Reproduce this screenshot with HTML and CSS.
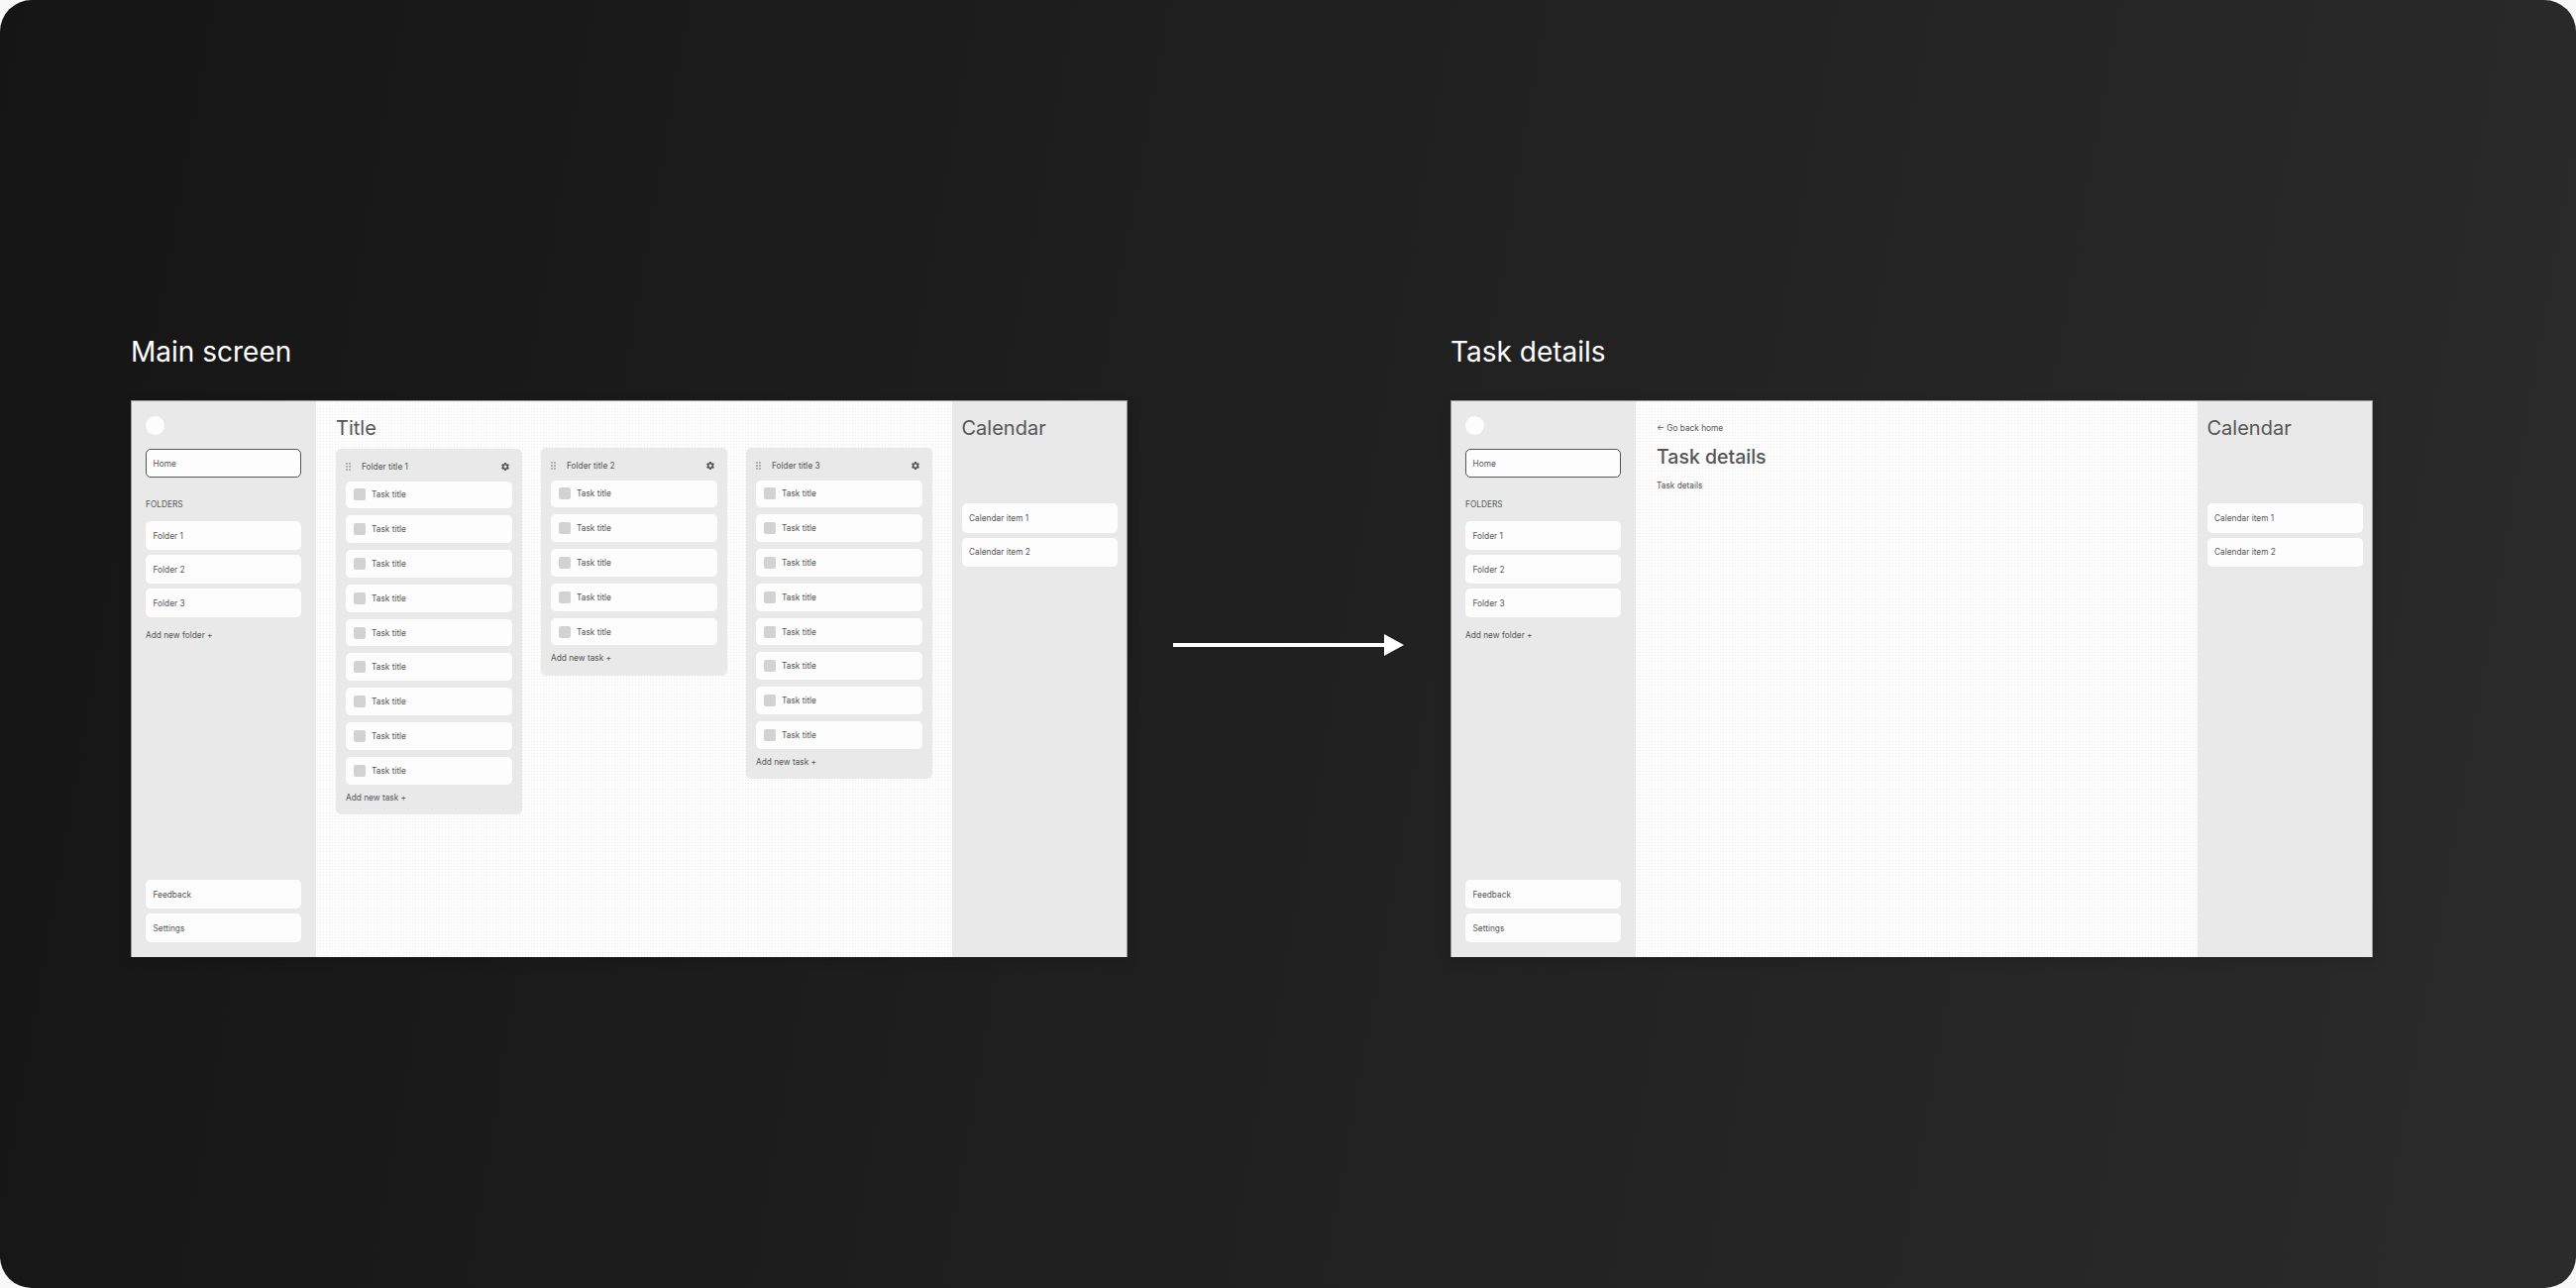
FILE: index.html
```html
<!DOCTYPE html>
<html lang="en">
<head>
  <meta charset="UTF-8">
  <title>Main screen and Task details</title>
  <link rel="stylesheet" href="styles.css">
</head>
<body>
  <svg class="defs" width="0" height="0">
    <symbol id="gear" viewBox="0 0 24 24">
      <path d="M19.14 12.94c.04-.3.06-.61.06-.94 0-.32-.02-.64-.07-.94l2.03-1.58c.18-.14.23-.41.12-.61l-1.92-3.32c-.12-.22-.37-.29-.59-.22l-2.39.96c-.5-.38-1.03-.7-1.62-.94l-.36-2.54c-.04-.24-.24-.41-.48-.41h-3.84c-.24 0-.43.17-.47.41l-.36 2.54c-.59.24-1.13.57-1.62.94l-2.39-.96c-.22-.08-.47 0-.59.22L2.74 8.87c-.12.21-.08.47.12.61l2.03 1.58c-.05.3-.09.63-.09.94s.02.64.07.94l-2.03 1.58c-.18.14-.23.41-.12.61l1.92 3.32c.12.22.37.29.59.22l2.39-.96c.5.38 1.03.7 1.62.94l.36 2.54c.05.24.24.41.48.41h3.84c.24 0 .44-.17.47-.41l.36-2.54c.59-.24 1.13-.56 1.62-.94l2.39.96c.22.08.47 0 .59-.22l1.92-3.32c.12-.22.07-.47-.12-.61l-2.01-1.58zM12 15.6c-1.98 0-3.6-1.62-3.6-3.6s1.62-3.6 3.6-3.6 3.6 1.62 3.6 3.6-1.62 3.6-3.6 3.6z"/>
    </symbol>
    <symbol id="grip" viewBox="0 0 6 8">
      <circle cx="1" cy="1" r=".7"/><circle cx="4" cy="1" r=".7"/>
      <circle cx="1" cy="4" r=".7"/><circle cx="4" cy="4" r=".7"/>
      <circle cx="1" cy="7" r=".7"/><circle cx="4" cy="7" r=".7"/>
    </symbol>
  </svg>

  <div class="page">
    <section class="screen screen-main">
      <h2 class="screen-label">Main screen</h2>
      <div class="frame">
        <aside class="sidebar">
          <div class="logo"></div>
          <div class="card card-home">Home</div>
          <div class="section-label">FOLDERS</div>
          <div class="card-list">
            <div class="card">Folder 1</div>
            <div class="card">Folder 2</div>
            <div class="card">Folder 3</div>
          </div>
          <div class="add-folder">Add new folder +</div>
          <div class="card-list sidebar-bottom">
            <div class="card">Feedback</div>
            <div class="card">Settings</div>
          </div>
        </aside>
        <main class="content">
          <h1 class="title">Title</h1>
          <div class="columns">
            <div class="column column-first">
              <div class="column-head">
                <svg class="grip"><use href="#grip"/></svg>
                <span class="column-name">Folder title 1</span>
                <svg class="gear"><use href="#gear"/></svg>
              </div>
              <div class="task"><span class="check"></span>Task title</div>
              <div class="task"><span class="check"></span>Task title</div>
              <div class="task"><span class="check"></span>Task title</div>
              <div class="task"><span class="check"></span>Task title</div>
              <div class="task"><span class="check"></span>Task title</div>
              <div class="task"><span class="check"></span>Task title</div>
              <div class="task"><span class="check"></span>Task title</div>
              <div class="task"><span class="check"></span>Task title</div>
              <div class="task"><span class="check"></span>Task title</div>
              <div class="add-task">Add new task +</div>
            </div>
            <div class="column">
              <div class="column-head">
                <svg class="grip"><use href="#grip"/></svg>
                <span class="column-name">Folder title 2</span>
                <svg class="gear"><use href="#gear"/></svg>
              </div>
              <div class="task"><span class="check"></span>Task title</div>
              <div class="task"><span class="check"></span>Task title</div>
              <div class="task"><span class="check"></span>Task title</div>
              <div class="task"><span class="check"></span>Task title</div>
              <div class="task"><span class="check"></span>Task title</div>
              <div class="add-task">Add new task +</div>
            </div>
            <div class="column">
              <div class="column-head">
                <svg class="grip"><use href="#grip"/></svg>
                <span class="column-name">Folder title 3</span>
                <svg class="gear"><use href="#gear"/></svg>
              </div>
              <div class="task"><span class="check"></span>Task title</div>
              <div class="task"><span class="check"></span>Task title</div>
              <div class="task"><span class="check"></span>Task title</div>
              <div class="task"><span class="check"></span>Task title</div>
              <div class="task"><span class="check"></span>Task title</div>
              <div class="task"><span class="check"></span>Task title</div>
              <div class="task"><span class="check"></span>Task title</div>
              <div class="task"><span class="check"></span>Task title</div>
              <div class="add-task">Add new task +</div>
            </div>
          </div>
        </main>
        <aside class="calendar">
          <h1 class="title">Calendar</h1>
          <div class="card-list calendar-items">
            <div class="card">Calendar item 1</div>
            <div class="card">Calendar item 2</div>
          </div>
        </aside>
      </div>
    </section>

    <svg class="arrow" viewBox="0 0 233 22">
      <rect x="0" y="9" width="214" height="4" fill="#fff"/>
      <path d="M213 0L233 11L213 22Z" fill="#fff"/>
    </svg>

    <section class="screen screen-details">
      <h2 class="screen-label">Task details</h2>
      <div class="frame">
        <aside class="sidebar">
          <div class="logo"></div>
          <div class="card card-home">Home</div>
          <div class="section-label">FOLDERS</div>
          <div class="card-list">
            <div class="card">Folder 1</div>
            <div class="card">Folder 2</div>
            <div class="card">Folder 3</div>
          </div>
          <div class="add-folder">Add new folder +</div>
          <div class="card-list sidebar-bottom">
            <div class="card">Feedback</div>
            <div class="card">Settings</div>
          </div>
        </aside>
        <main class="content content-details">
          <div class="back-link">← Go back home</div>
          <h1 class="title title-details">Task details</h1>
          <p class="details-text">Task details</p>
        </main>
        <aside class="calendar">
          <h1 class="title">Calendar</h1>
          <div class="card-list calendar-items">
            <div class="card">Calendar item 1</div>
            <div class="card">Calendar item 2</div>
          </div>
        </aside>
      </div>
    </section>
  </div>
</body>
</html>
```

FILE: styles.css
```css
* {
  margin: 0;
  padding: 0;
  box-sizing: border-box;
}

body {
  width: 2600px;
  height: 1300px;
  overflow: hidden;
  background-color: #f8f8f8;
  font-family: Inter, "Liberation Sans", sans-serif;
  font-size: 8.3px;
  line-height: 12px;
  color: #555;
}

.defs {
  position: absolute;
}

.page {
  display: flex;
  align-items: flex-start;
  height: 1300px;
  padding: 338px 0 0 132px;
  border-radius: 32px;
  background: linear-gradient(100deg, #151515, #2b2b2b);
}

.screen-main {
  width: 1006px;
}

.screen-details {
  width: 931px;
}

.screen-label {
  height: 34px;
  margin-bottom: 32px;
  font-size: 28px;
  line-height: 34px;
  font-weight: 400;
  color: #fff;
}

.arrow {
  flex: none;
  width: 233px;
  height: 22px;
  margin: 302px 47px 0 46px;
}

.frame {
  display: flex;
  height: 562px;
  border: 1px solid #999;
  border-bottom: none;
  box-shadow: 0 4px 12px rgba(0, 0, 0, 0.15);
}

/* sidebar */
.sidebar {
  display: flex;
  flex-direction: column;
  flex: none;
  width: 186px;
  padding: 15px 15px 15px 14px;
  background-color: #e9e9e9;
}

.logo {
  width: 19px;
  height: 19px;
  border-radius: 50%;
  background-color: #fdfdfd;
}

.card {
  display: flex;
  align-items: center;
  height: 29px;
  padding: 0 7.5px;
  border-radius: 5px;
  background-color: #fdfdfd;
}

.card-home {
  margin-top: 14px;
  border: 1px solid #555;
  padding: 0 6.5px;
}

.section-label {
  margin-top: 21px;
}

.card-list {
  display: flex;
  flex-direction: column;
  gap: 5px;
  margin-top: 11px;
}

.add-folder {
  margin-top: 12px;
}

.sidebar-bottom {
  margin-top: auto;
}

/* main area */
.content {
  flex: 1;
  padding: 14px 0 0 20px;
  background-color: #fdfdfd;
  background-image: radial-gradient(#ececec 0.7px, transparent 0.8px);
  background-size: 3px 3px;
}

.title {
  height: 26px;
  font-size: 20px;
  line-height: 26px;
  font-weight: 400;
}

.columns {
  display: flex;
  align-items: flex-start;
  gap: 19px;
  margin-top: 7px;
}

.column {
  display: flex;
  flex-direction: column;
  gap: 7px;
  width: 188px;
  padding: 0 10px 11.5px;
  border-radius: 5px;
  background-color: #e9e9e9;
}

.column-first {
  margin-top: 1px;
}

.column-head {
  display: flex;
  align-items: center;
  height: 25.5px;
  padding-top: 10px;
}

.grip {
  flex: none;
  width: 6px;
  height: 8px;
  fill: #555;
}

.column-name {
  flex: 1;
  margin-left: 10px;
}

.gear {
  flex: none;
  width: 10px;
  height: 10px;
  margin-right: 2px;
  fill: #555;
}

.task {
  display: flex;
  align-items: center;
  height: 27.8px;
  padding-left: 8px;
  border-radius: 5px;
  background-color: #fdfdfd;
}

.check {
  flex: none;
  width: 12px;
  height: 12px;
  margin-right: 6px;
  border-radius: 2px;
  background-color: #d2d2d2;
}

/* calendar */
.calendar {
  flex: none;
  width: 176.5px;
  padding: 14px 9px 0 10px;
  background-color: #e9e9e9;
}

.calendar-items {
  margin-top: 63px;
}

.calendar-items .card {
  height: 29.5px;
}

/* task details screen */
.content-details {
  padding: 21px 0 0 21px;
}

.title-details {
  margin-top: 10px;
  font-size: 19.5px;
  font-weight: 500;
}

.details-text {
  margin-top: 10px;
}
```
